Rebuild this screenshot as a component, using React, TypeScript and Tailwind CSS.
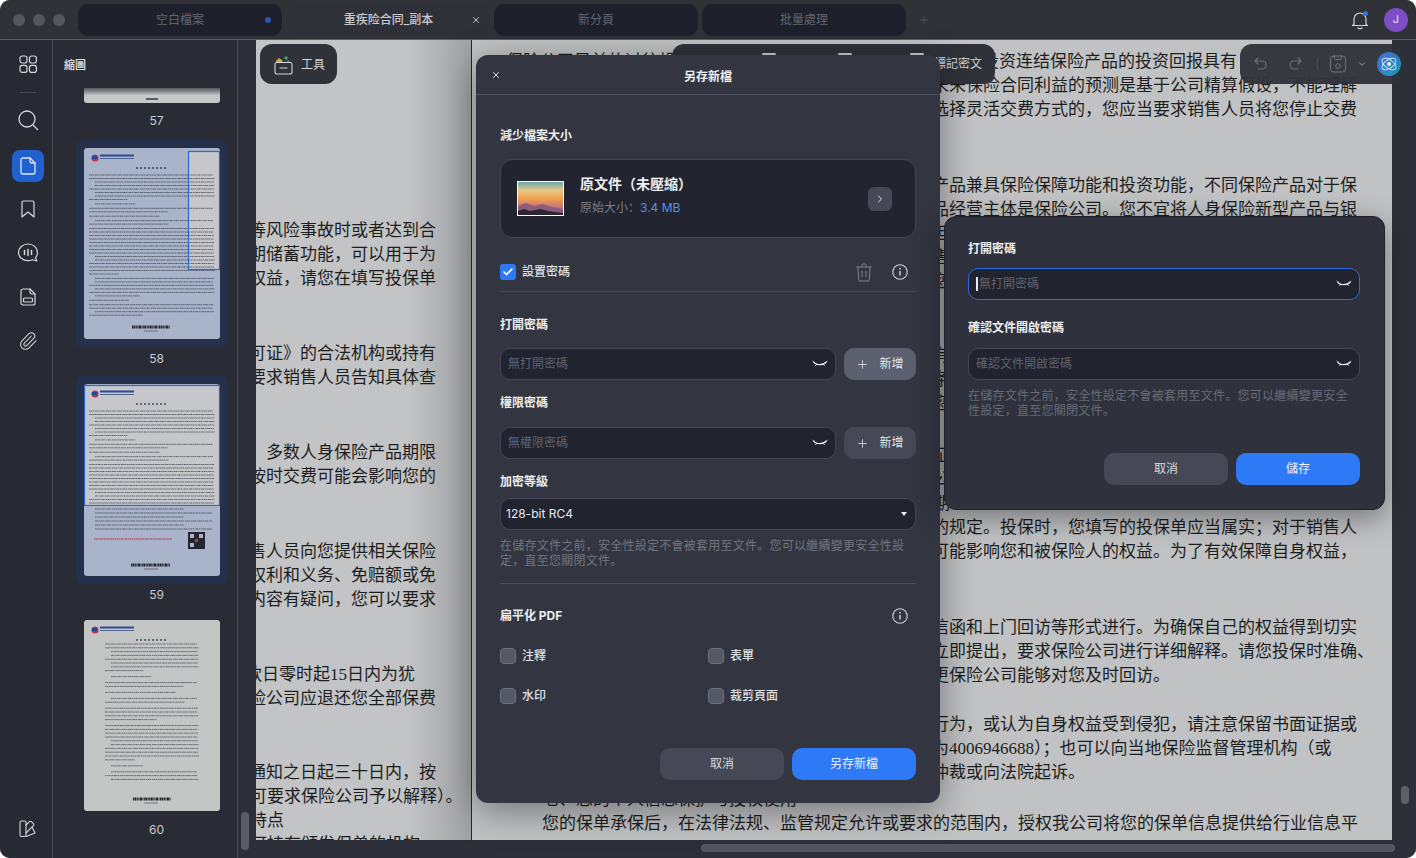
import React from "react";
import { X, Plus, ChevronRight, ChevronDown, Check, Paperclip } from "lucide-react";

const ink = "#d5d6da";

function Ico({ children, size = 24, color = ink, sw = 1.4, vb = 24 }: { children: React.ReactNode; size?: number; color?: string; sw?: number; vb?: number }) {
  return (
    <svg width={size} height={size} viewBox={`0 0 ${vb} ${vb}`} fill="none" stroke={color} strokeWidth={sw} strokeLinecap="round" strokeLinejoin="round">
      {children}
    </svg>
  );
}

function EyeClosed() {
  return (
    <svg width="16" height="10" viewBox="0 0 16 10" fill="none" stroke="#f2f3f5" strokeWidth="1.2" strokeLinecap="round">
      <path d="M2 3.2C4 6.4 11.8 6.4 14 3.2" />
      <path d="M1 2.4l1.6 1.4M15 2.4l-1.6 1.4M4.6 5.2l-.8 1.2M11.4 5.2l.8 1.2" strokeWidth="1" />
    </svg>
  );
}

function InfoIcon() {
  return (
    <svg width="16" height="16" viewBox="0 0 16 16" fill="none" stroke="#d0d1d6" strokeWidth="1.1">
      <circle cx="8" cy="8" r="7.2" />
      <path d="M8 7v4.4" strokeWidth="1.5" />
      <circle cx="8" cy="4.7" r="0.9" fill="#d0d1d6" stroke="none" />
    </svg>
  );
}

function rnd(i: number) {
  const v = Math.sin(i * 12.9898) * 43758.5453;
  return v - Math.floor(v);
}

const dashes = ["1.3 .35 2 .4 1 .6", "1.6 .5 1 .3 2.2 .5", "1 .4 1.4 .6 2 .3", "2 .3 1.2 .7 1.5 .4"];

function Doc({ tint, view, variant = "a" }: { tint: string; view?: [number, number, number, number]; variant?: "a" | "b" }) {
  const rows: React.ReactNode[] = [];
  const left = variant === "a" ? 5 : 21;
  const right = variant === "a" ? 131 : 115;
  const end = variant === "a" ? 168 : 163;
  let y = variant === "a" ? 27 : 24;
  let i = 0;
  while (y < end) {
    const gap = rnd(i + 3);
    const short = gap > (variant === "a" ? 0.8 : 0.7);
    const indent = rnd(i + 8) > 0.72 ? 6 : 0;
    const x2 = short ? left + 30 + rnd(i) * 50 : right - rnd(i + 1) * 2;
    rows.push(
      <line key={i} x1={left + indent} x2={x2} y1={y} y2={y} stroke="#2b2f3a" strokeWidth="1" strokeDasharray={dashes[i % 4]} opacity="0.62" />
    );
    y += short ? (variant === "a" ? 4.4 : 6) : variant === "a" ? 3.5 : 3.8;
    i++;
  }
  return (
    <svg width="136" height="191" viewBox="0 0 136 191" className="block rounded-[3px]">
      <rect width="136" height="191" fill={tint} />
      {view && <rect x={view[0]} y={view[1]} width={view[2]} height={view[3]} fill="#c6c7ca" />}
      <circle cx="11" cy="10" r="3.6" fill="#c9303a" />
      <path d="M8 8h5v3H8z" fill="#27489a" />
      <rect x="16" y="6.5" width="34" height="2" fill="#2c4a94" />
      <rect x="16" y="10" width="34" height="1" fill="#50648e" />
      <line x1="52" x2="84" y1="20" y2="20" stroke="#2b2f3a" strokeWidth="1.4" strokeDasharray="2 2" opacity="0.8" />
      {rows}
      <line x1={variant === "a" ? 48 : 49} x2={variant === "a" ? 86 : 87} y1="179" y2="179" stroke="#1f2128" strokeWidth="3" strokeDasharray="1 .5 2 .6 .8 .5" />
      <line x1="60" x2="74" y1="183" y2="183" stroke="#3c3f47" strokeWidth="1" opacity="0.6" />
      {view && <rect x={view[0] + 0.5} y={view[1] + 0.5} width={view[2] - 1} height={view[3] - 1} fill="none" stroke="#2b69d8" strokeWidth="1.2" />}
    </svg>
  );
}

function Doc59() {
  return (
    <div className="relative h-[192px] w-[136px] overflow-hidden rounded-[3px]">
      <Doc tint="#a9b3ca" view={[0, 1, 136, 121]} />
      <svg width="136" height="70" viewBox="0 0 136 70" className="absolute left-0 top-[122px]">
        <rect width="136" height="70" fill="#a9b3ca" />
        {[3, 7, 11, 15, 19, 23].map((y, k) => (
          <line key={k} x1="11" x2={k % 2 ? 128 : 100} y1={y} y2={y} stroke="#2b2f3a" strokeWidth="1" strokeDasharray={dashes[k % 4]} opacity="0.62" />
        ))}
        <line x1="10" x2="88" y1="33" y2="33" stroke="#c23045" strokeWidth="1" strokeDasharray="1.3 .4 2 .5" />
        <rect x="104" y="26" width="17" height="17" fill="#23262f" />
        <rect x="106" y="28" width="4" height="4" fill="#a9b3ca" />
        <rect x="115" y="28" width="4" height="4" fill="#a9b3ca" />
        <rect x="106" y="37" width="4" height="4" fill="#a9b3ca" />
        <rect x="111" y="33" width="3" height="3" fill="#c9303a" />
        <line x1="47" x2="86" y1="59" y2="59" stroke="#1f2128" strokeWidth="3" strokeDasharray="1 .5 2 .6 .8 .5" />
        <line x1="60" x2="74" y1="63" y2="63" stroke="#3c3f47" strokeWidth="1" opacity="0.6" />
      </svg>
    </div>
  );
}

function PageLabel({ n }: { n: number }) {
  return <div className="flex h-[18px] items-center justify-center pt-[2px] text-[12px] leading-4 text-[#c9cace]">{n}</div>;
}

function Selected({ children }: { children: React.ReactNode }) {
  return <div className="flex h-[208px] w-[151px] justify-center rounded-md bg-[#25314b] pt-2">{children}</div>;
}

function Rail() {
  return (
    <div className="flex w-[53px] shrink-0 flex-col items-center border-r border-[#474a54] bg-[#282a33] pl-[3px] pt-[14px]">
      <Ico size={20} sw={1.2} vb={20}>
        <rect x="2" y="2" width="7" height="7" rx="2.2" />
        <rect x="11.4" y="2" width="7" height="7" rx="2.2" />
        <rect x="2" y="11.4" width="7" height="7" rx="2.2" />
        <rect x="11.4" y="11.4" width="7" height="7" rx="2.2" />
      </Ico>
      <div className="mt-[18px] h-px w-4 bg-[#474a54]" />
      <div className="mt-[16px] flex">
        <Ico size={22} sw={1.3} vb={22}>
          <circle cx="10" cy="10" r="8" />
          <path d="M16 16l4.5 4.5" />
        </Ico>
      </div>
      <div className="mt-[19px] flex h-8 w-8 items-center justify-center rounded-lg bg-[#2060cf]">
        <Ico size={20} color="#dfe7f7" sw={1.3} vb={20}>
          <path d="M5 2h7l5 5v9a2 2 0 0 1-2 2H5a2 2 0 0 1-2-2V4a2 2 0 0 1 2-2z" />
          <path d="M12 2v3a2 2 0 0 0 2 2h3" />
        </Ico>
      </div>
      <div className="mt-[17px] flex">
        <Ico size={20} sw={1.2} vb={20}>
          <path d="M4 3.5A1.5 1.5 0 0 1 5.5 2h9A1.5 1.5 0 0 1 16 3.5V18l-6-5-6 5z" />
        </Ico>
      </div>
      <div className="mt-[23px] flex">
        <Ico size={22} sw={1.2} vb={22}>
          <path d="M11 2c5.200 0 9.500 3.600 9.500 8.500 0 2-.7 3.800-2 5.200l1.300 3.300-4.300-1.300c-1.400.6-3 1-4.500 1-5.200 0-9.500-3.600-9.500-8.200S5.800 2 11 2z" />
          <path d="M7.500 8.500v4M11 7.500v6M14.500 8.500v4" strokeWidth="1.5" />
        </Ico>
      </div>
      <div className="mt-[23px] flex">
        <Ico size={20} sw={1.2} vb={20}>
          <path d="M5 2h7l5 5v9a2 2 0 0 1-2 2H5a2 2 0 0 1-2-2V4a2 2 0 0 1 2-2z" />
          <path d="M12 2v3a2 2 0 0 0 2 2h3" />
          <rect x="5.500" y="11" width="9" height="4" rx="1" />
        </Ico>
      </div>
      <div className="mt-[24px] flex">
        <Paperclip size={20} color={ink} strokeWidth={1.25} />
      </div>
      <div className="mb-[19px] mt-auto flex">
        <Ico size={20} sw={1.1} vb={20}>
          <rect x="2" y="2" width="6" height="15.500" rx="1.500" />
          <path d="M8 6l3.400-3.400a1.400 1.400 0 0 1 2 0l2 2a1.400 1.400 0 0 1 0 2L8 14" />
          <path d="M8 17.500l9-3.500-2.700-5.500" />
        </Ico>
      </div>
    </div>
  );
}

function Panel() {
  return (
    <div className="flex w-[203px] shrink-0 bg-[#2e3039]">
      <div className="flex w-[184px] flex-col bg-[#292c35]">
        <div className="flex h-[48px] items-center pl-[11px] pt-[2px] text-[11px] font-bold text-[#d6d7da]">縮圖</div>
        <div className="flex-1 overflow-hidden pl-[23px]">
          <div className="flex w-[151px] justify-center">
            <div className="flex h-[15px] w-[136px] items-end justify-center overflow-hidden rounded-b-[3px] bg-linear-to-b from-[#55575c] via-[#c6c7c9] to-[#c6c7c9] pb-[3px]">
              <div className="h-[2px] w-[12px] bg-[#55575c]" />
            </div>
          </div>
          <div className="mt-[8px]"><PageLabel n={57} /></div>
          <div className="mt-[11px]">
            <Selected><Doc tint="#a9b3ca" view={[104, 3, 32, 119]} /></Selected>
          </div>
          <div className="mt-px"><PageLabel n={58} /></div>
          <div className="mt-[9px]">
            <Selected><Doc59 /></Selected>
          </div>
          <div className="mt-px"><PageLabel n={59} /></div>
          <div className="mt-[9px]">
            <div className="flex h-[208px] w-[151px] justify-center pt-2">
              <Doc tint="#c4c6c6" variant="b" />
            </div>
          </div>
          <PageLabel n={60} />
        </div>
      </div>
      <div className="flex w-[19px] flex-col items-start justify-end border-l border-[#474a54] pb-2 pl-[3px]">
        <div className="h-[38px] w-2 rounded-full bg-[#5a5d69]" />
      </div>
    </div>
  );
}

function Tab({ title, active, dot, close, w }: { title: string; active?: boolean; dot?: boolean; close?: boolean; w: string }) {
  return (
    <div className={`relative flex h-8 items-center justify-center rounded-[10px] pt-px text-[12px] ${w} ${active ? "bg-[#2f3139] font-medium text-[#c9cace]" : "bg-[#1e202c] text-[#63656f]"}`}>
      {title}
      {dot && <span className="absolute right-[11px] top-[13px] h-[6px] w-[6px] rounded-full bg-[#2a55b0]" />}
      {close && <X className="absolute right-[9px] top-[11px]" size={10} color="#d8d9dc" strokeWidth={2} />}
    </div>
  );
}

function Header() {
  return (
    <div className="flex h-10 shrink-0 items-center border-b border-[#5b5d63] bg-[#303238] pl-[13px] pr-2">
      <div className="flex w-[65px] gap-2">
        <span className="h-3 w-3 rounded-full bg-[#54565c]" />
        <span className="h-3 w-3 rounded-full bg-[#54565c]" />
        <span className="h-3 w-3 rounded-full bg-[#54565c]" />
      </div>
      <div className="flex items-center gap-[3px]">
        <Tab title="空白檔案" dot w="w-[204px]" />
        <div className="ml-[2px]"><Tab title="重疾险合同_副本" active close w="w-[203px]" /></div>
        <div className="ml-px"><Tab title="新分頁" w="w-[204px]" /></div>
        <div className="ml-px"><Tab title="批量處理" w="w-[204px]" /></div>
      </div>
      <Plus className="ml-3" size={12} color="#50525a" />
      <div className="ml-auto flex items-center gap-[14px]">
        <div className="relative flex">
          <Ico size={20} sw={1.2} vb={20}>
            <path d="M4 14.500V9a6 6 0 0 1 12 0v5.500l1.500 1H2.500z" />
            <path d="M8 18c1 1 3 1 4 0" />
          </Ico>
          <span className="absolute right-[2px] top-px h-[5px] w-[5px] rounded-full bg-[#2f6fe0]" />
        </div>
        <div className="flex h-6 w-6 items-center justify-center rounded-full bg-[#7d4fc6] text-[11px] text-[#e9e2f6]">J</div>
      </div>
    </div>
  );
}

const L1: string[][] = [
  ["等风险事故时或者达到合", "期储蓄功能，可以用于为", "权益，请您在填写投保单"],
  ["可证》的合法机构或持有", "要求销售人员告知具体查"],
  ["多数人身保险产品期限", "按时交费可能会影响您的"],
  ["售人员向您提供相关保险", "权利和义务、免赔额或免", "内容有疑问，您可以要求"],
];

function EndLine({ t }: { t: string }) {
  return (
    <div className="flex h-6 w-[180px] justify-end overflow-hidden whitespace-nowrap leading-6">
      <span className="shrink-0">{t}</span>
    </div>
  );
}

function Page1() {
  return (
    <div className="w-[215px] shrink-0 overflow-hidden bg-linear-to-r from-[#c3c4c6] from-70% to-[#a1a2a5] pt-[179px] text-[#1d1e20]">
      {L1.map((g, i) => (
        <div key={i} className={i ? "mt-[51px]" : ""}>
          {g.map((t, k) => (
            <EndLine key={k} t={t} />
          ))}
        </div>
      ))}
      <div className="mt-[51px] w-[180px] overflow-hidden whitespace-nowrap leading-6">
        <div className="-ml-[11px] h-6">款日零时起15日内为犹</div>
        <EndLine t="险公司应退还您全部保费" />
      </div>
      <div className="mt-[50px] w-[215px] whitespace-nowrap leading-6">
        <div className="-ml-[7px] h-6">通知之日起三十日内，按</div>
        <div className="-ml-[6px] h-6">可要求保险公司予以解释）。</div>
        <div className="-ml-[6px] h-6">持点</div>
        <div className="-ml-[6px] h-6">可持有颁发保单的机构</div>
      </div>
    </div>
  );
}

function Lines({ items, cls }: { items: string[]; cls?: string }) {
  return (
    <div className={cls}>
      {items.map((t, i) => (
        <div key={i} className="h-6 whitespace-nowrap leading-6">{t}</div>
      ))}
    </div>
  );
}

function Page2() {
  return (
    <div className="min-w-0 flex-1 overflow-hidden border-l border-[#26272b] bg-[#c1c2c4] pt-[10px] text-[#1d1e20]">
      <div className="ml-[35px] flex h-6 w-[730px] justify-end overflow-hidden whitespace-nowrap leading-6">
        <span className="shrink-0">保险公司目前的过往投资业绩并不代表其未来表现，您应当理解投资连结保险产品的投资回报具有</span>
      </div>
      <Lines
        cls="pl-[460px]"
        items={["未来保险合同利益的预测是基于公司精算假设，不能理解", "选择灵活交费方式的，您应当要求销售人员将您停止交费"]}
      />
      <Lines
        cls="mt-[52px] pl-[460px]"
        items={[
          "产品兼具保险保障功能和投资功能，不同保险产品对于保",
          "品经营主体是保险公司。您不宜将人身保险新型产品与银",
          "担保险责任",
          "售人员",
          "您",
        ]}
      />
      <Lines cls="mt-[50px] pl-[461px]" items={["有", "条", "您"]} />
      <Lines cls="mt-[28px] pl-[461px]" items={["证", "公", "期"]} />
      <Lines
        cls="pl-[460px]"
        items={["的规定。投保时，您填写的投保单应当属实；对于销售人", "可能影响您和被保险人的权益。为了有效保障自身权益，"]}
      />
      <Lines
        cls="mt-[52px] pl-[460px]"
        items={[
          "信函和上门回访等形式进行。为确保自己的权益得到切实",
          "立即提出，要求保险公司进行详细解释。请您投保时准确、",
          "更保险公司能够对您及时回访。",
        ]}
      />
      <Lines
        cls="mt-[25px] pl-[460px]"
        items={[
          "行为，或认为自身权益受到侵犯，请注意保留书面证据或",
          "为4006946688）；也可以向当地保险监督管理机构（或",
          "仲裁或向法院起诉。",
        ]}
      />
      <Lines
        cls="mt-[3px] pl-[70px]"
        items={["七、您的个人信息保护与授权使用", "您的保单承保后，在法律法规、监管规定允许或要求的范围内，授权我公司将您的保单信息提供给行业信息平"]}
      />
    </div>
  );
}

function Label({ children, cls = "" }: { children: React.ReactNode; cls?: string }) {
  return <div className={`text-[12px] font-bold leading-4 text-[#eceded] ${cls}`}>{children}</div>;
}

function PwInput({ text, w, focus }: { text: string; w?: string; focus?: boolean }) {
  return (
    <div className={`flex h-[32px] items-center justify-between rounded-[10px] border bg-[#21232f] pl-[7px] pr-[7px] text-[12px] text-[#5f626e] ${w ?? "w-full"} ${focus ? "border-[#2d6be0]" : "border-[#454854]"}`}>
      <span className="flex items-center">
        {focus && <span className="mr-px h-[14px] w-[2px] bg-[#e8e9ec]" />}
        {text}
      </span>
      <EyeClosed />
    </div>
  );
}

function AddBtn({ light }: { light?: boolean }) {
  return (
    <div className={`flex h-[32px] w-[72px] items-center justify-center gap-[10px] rounded-[10px] text-[12px] text-[#e3e4e8] ${light ? "bg-[#5d606f]" : "bg-[#464955]"}`}>
      <Plus size={13} color="#e3e4e8" strokeWidth={1.5} />
      新增
    </div>
  );
}

function Check2({ label }: { label: string }) {
  return (
    <div className="flex items-center gap-[6px]">
      <span className="h-4 w-4 rounded-[4px] border border-[#6d707c] bg-[#555865]" />
      <span className="text-[12px] font-medium leading-4 text-[#dfe0e3]">{label}</span>
    </div>
  );
}

function BtnPair({ save }: { save: string }) {
  return (
    <div className="flex justify-end gap-2 text-[12px]">
      <div className="flex h-8 w-[124px] items-center justify-center rounded-[10px] bg-[#464955] text-[#d9dade]">取消</div>
      <div className="flex h-8 w-[124px] items-center justify-center rounded-[10px] bg-[#2e79f6] text-[#eef3fd]">{save}</div>
    </div>
  );
}

function SaveModal() {
  return (
    <div className="absolute left-[476px] top-[55px] z-20 flex h-[748px] w-[464px] flex-col rounded-xl bg-[#333641] shadow-[0_8px_36px_rgba(0,0,0,0.4)]">
      <div className="relative flex h-[40px] shrink-0 items-center justify-center border-b border-[#4b4e59] pt-[5px] text-[12px] font-bold text-[#eeeff1]">
        <X className="absolute left-[15px] top-[15px]" size={10} color="#e6e7ea" strokeWidth={2.2} />
        另存新檔
      </div>
      <div className="flex flex-1 flex-col px-6 pt-[33px]">
        <Label>減少檔案大小</Label>
        <div className="mt-[15px] flex h-[79px] items-center rounded-xl border border-[#444752] bg-[#22242f] pl-4 pr-[23px]">
          <svg width="47" height="35" viewBox="0 0 47 35" className="shrink-0">
            <defs>
              <linearGradient id="sky" x1="0" y1="0" x2="0" y2="1">
                <stop offset="0" stopColor="#6aa9ad" />
                <stop offset="0.25" stopColor="#e7c987" />
                <stop offset="0.5" stopColor="#f0a24f" />
                <stop offset="0.75" stopColor="#c9757c" />
                <stop offset="1" stopColor="#7a4f70" />
              </linearGradient>
            </defs>
            <rect width="47" height="35" fill="#fff" />
            <rect x="1" y="1" width="45" height="33" fill="url(#sky)" />
            <path d="M1 25l8-3 8 3 8-2 10 3 11 2v5H1z" fill="#8d5d7d" />
            <path d="M1 30l6-2 6 2 10-2 8 2 15 2v2H1z" fill="#2c2630" />
          </svg>
          <div className="mb-2 ml-4 flex flex-col">
            <span className="text-[14px] font-bold leading-5 text-[#f0f0f2]">原文件（未壓縮）</span>
            <span className="mt-[6px] text-[12px] leading-4 text-[#7b7e89]">
              原始大小：<span className="text-[#5b8fe6]">3.4 MB</span>
            </span>
          </div>
          <div className="ml-auto flex h-6 w-6 items-center justify-center rounded-md bg-[#464955]">
            <ChevronRight size={12} color="#e6e7ea" strokeWidth={2} />
          </div>
        </div>
        <div className="mt-[26px] flex h-4 items-center">
          <span className="flex h-4 w-4 items-center justify-center rounded-[3px] bg-[#2e79f6]">
            <Check size={12} color="#fff" strokeWidth={3.5} />
          </span>
          <span className="ml-[6px] text-[12px] font-medium text-[#dfe0e3]">設置密碼</span>
          <span className="ml-auto mr-[18px] flex">
            <Ico size={20} color="#7f828c" sw={1} vb={20}>
              <path d="M2.500 5h15M8 5V2.800c0-.5.4-.8.8-.8h2.400c.4 0 .8.300.8.800V5M4 5l.6 12.600a1.500 1.500 0 0 0 1.500 1.400h7.800a1.500 1.500 0 0 0 1.500-1.400L16 5M8 9v5.500M12 9v5.500" />
            </Ico>
          </span>
          <span className="mr-2 flex"><InfoIcon /></span>
        </div>
        <div className="mt-[11px] h-px bg-[#4b4e59]" />
        <Label cls="mt-[25px]">打開密碼</Label>
        <div className="mt-[15px] flex justify-between">
          <PwInput text="無打開密碼" w="w-[336px]" />
          <AddBtn light />
        </div>
        <Label cls="mt-[15px]">權限密碼</Label>
        <div className="mt-[16px] flex justify-between">
          <PwInput text="無權限密碼" w="w-[336px]" />
          <AddBtn />
        </div>
        <Label cls="mt-[15px]">加密等級</Label>
        <div className="mt-[8px] flex h-[32px] items-center justify-between rounded-[10px] border border-[#454854] bg-[#21232f] pl-[5px] pr-[7px] text-[12px] text-[#e8e9ec]">
          128-bit RC4
          <svg width="8" height="6" viewBox="0 0 8 6"><path d="M1 1h6L4 5z" fill="#f0f0f2" /></svg>
        </div>
        <p className="mt-[8px] text-[12px] leading-[15px] tracking-[0.25px] text-[#71747f]">在儲存文件之前，安全性設定不會被套用至文件。您可以繼續變更安全性設定，直至您關閉文件。</p>
        <div className="mt-[15px] h-px bg-[#4b4e59]" />
        <div className="mt-[24px] flex items-center justify-between pr-2">
          <Label>扁平化 PDF</Label>
          <InfoIcon />
        </div>
        <div className="mt-[24px] grid grid-cols-[208px_1fr] gap-y-6">
          <Check2 label="注釋" />
          <Check2 label="表單" />
          <Check2 label="水印" />
          <Check2 label="裁剪頁面" />
        </div>
        <div className="mt-[44px]"><BtnPair save="另存新檔" /></div>
      </div>
    </div>
  );
}

function PwModal() {
  return (
    <div className="absolute left-[944px] top-[216px] z-20 h-[294px] w-[441px] rounded-xl border border-[#20222a] bg-[#2f323d] px-[23px] pt-6 shadow-[0_8px_30px_rgba(0,0,0,0.4)]">
      <Label>打開密碼</Label>
      <div className="mt-[11px] w-[392px]"><PwInput text="無打開密碼" focus /></div>
      <Label cls="mt-5">確認文件開啟密碼</Label>
      <div className="mt-3 w-[392px]"><PwInput text="確認文件開啟密碼" /></div>
      <p className="mt-[8px] w-[384px] text-[12px] leading-[15px] tracking-[0.25px] text-[#686b76]">在儲存文件之前，安全性設定不會被套用至文件。您可以繼續變更安全性設定，直至您關閉文件。</p>
      <div className="mt-[35px] w-[392px]"><BtnPair save="儲存" /></div>
    </div>
  );
}

function ToolsBtn() {
  return (
    <div className="absolute left-[260px] top-[44px] z-10 flex h-10 w-[77px] items-center gap-[8px] rounded-xl bg-[#30323a] pl-[14px] pt-px text-[12px] text-[#d0d1d5]">
      <svg width="19" height="20" viewBox="0 0 19 20" fill="none">
        <path d="M2 6l3-3 3 2 1 3H2z" fill="#d8a63c" />
        <circle cx="12" cy="3" r="1.800" fill="#3f9f6b" />
        <path d="M12 8l2-3 3 3z" fill="#2f8fc4" />
        <rect x="1" y="7.500" width="17" height="11.500" rx="2" stroke="#d5d6da" strokeWidth="1.100" />
        <path d="M6 13h7" stroke="#d5d6da" strokeWidth="1.100" strokeLinecap="round" />
      </svg>
      工具
    </div>
  );
}

function CenterBar() {
  return (
    <div className="absolute left-[672px] top-[44px] z-10 flex h-10 w-[323px] items-start justify-end rounded-xl bg-[#30323a] pr-[13px] pt-[11px] text-[12px] leading-[18px] text-[#d0d1d5]">
      <span className="absolute left-[90px] top-[9px] h-[2px] w-[14px] rounded-full bg-[#c9cacd]" />
      <span className="absolute left-[166px] top-[9px] h-[2px] w-[14px] rounded-full bg-[#c9cacd]" />
      <span className="absolute left-[238px] top-[9px] h-[2px] w-[14px] rounded-full bg-[#c9cacd]" />
      標記密文
    </div>
  );
}

function RightBar() {
  return (
    <div className="absolute left-[1240px] top-[44px] z-10 flex h-10 w-[165px] items-center rounded-xl bg-[#30323a] pl-[12px] opacity-95">
      <Ico size={16} color="#696b74" sw={1.2} vb={16}>
        <path d="M3 5h7a4 4 0 0 1 0 8H6M3 5l3-3M3 5l3 3" />
      </Ico>
      <span className="ml-[20px] flex">
        <Ico size={16} color="#696b74" sw={1.2} vb={16}>
          <path d="M13 5H6a4 4 0 0 0 0 8h4M13 5l-3-3M13 5l-3 3" />
        </Ico>
      </span>
      <span className="ml-[13px] h-[12px] w-px bg-[#4a4c55]" />
      <span className="ml-[11px] flex">
        <Ico size={18} color="#6d6f78" sw={1} vb={18}>
          <rect x="1.500" y="1" width="15" height="16" rx="3" />
          <path d="M5.500 1v2.500a1 1 0 0 0 1 1h5a1 1 0 0 0 1-1V1" />
          <circle cx="9" cy="11" r="2.300" />
        </Ico>
      </span>
      <ChevronDown className="ml-[10px]" size={10} color="#a9abb2" strokeWidth={2} />
      <span className="ml-[10px] flex">
        <svg width="24" height="24" viewBox="0 0 24 24" fill="none">
          <defs>
            <linearGradient id="orb" x1="0" y1="0" x2="1" y2="1">
              <stop offset="0" stopColor="#3a63e0" />
              <stop offset="1" stopColor="#1c9fb0" />
            </linearGradient>
          </defs>
          <circle cx="12" cy="12" r="12" fill="url(#orb)" />
          <ellipse cx="12" cy="12" rx="8" ry="4.200" stroke="#cfe6f7" strokeWidth="1" transform="rotate(35 12 12)" />
          <ellipse cx="12" cy="12" rx="8" ry="4.200" stroke="#cfe6f7" strokeWidth="1" transform="rotate(-35 12 12)" />
          <circle cx="12" cy="12" r="2" fill="#e6f4fb" />
        </svg>
      </span>
    </div>
  );
}

export default function App() {
  return (
    <div className="relative flex h-[858px] w-[1416px] flex-col overflow-hidden rounded-[10px] bg-[#2f3139] font-['Inter','Noto_Sans_CJK_SC',sans-serif]">
      <Header />
      <div className="flex min-h-0 flex-1">
        <Rail />
        <Panel />
        <div className="flex min-w-0 flex-1 flex-col">
          <div className="flex min-h-0 flex-1 font-['Liberation_Serif','Noto_Sans_CJK_SC',serif] text-[17px]">
            <Page1 />
            <Page2 />
            <div className="flex w-6 shrink-0 flex-col items-start justify-end bg-[#2e3039] pb-9 pl-[9px]">
              <div className="h-[18px] w-2 rounded-full bg-[#5d5f6a]" />
            </div>
          </div>
          <div className="flex h-[18px] shrink-0 items-start bg-[#2e3039] pl-[445px] pr-[21px] pt-[4px]">
            <div className="h-2 w-full rounded-full bg-[#54565f]" />
          </div>
        </div>
      </div>
      <ToolsBtn />
      <CenterBar />
      <RightBar />
      <SaveModal />
      <PwModal />
    </div>
  );
}
